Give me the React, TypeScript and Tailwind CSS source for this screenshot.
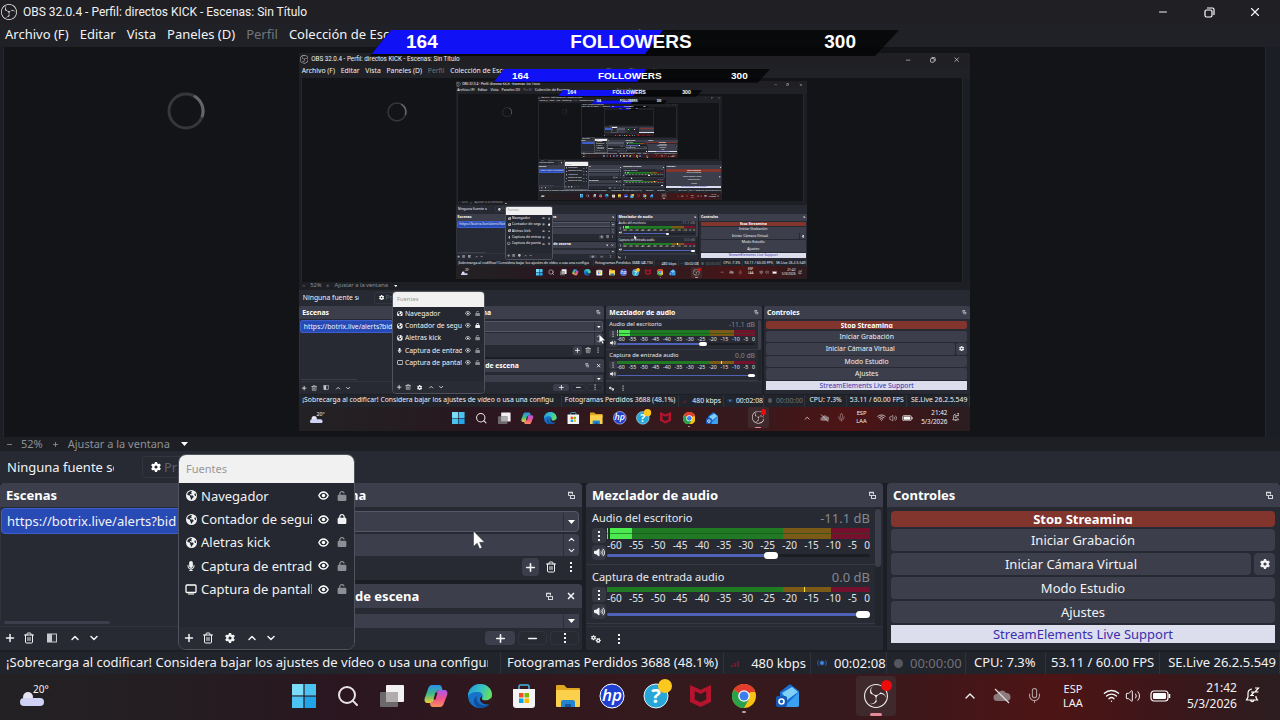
import React, { useId, useState } from 'react';
import { ChevronDown, ChevronUp, Minus, Plus, Search, Trash2, X, Mic, Wifi, Volume2 } from 'lucide-react';
import { FaEarthAmericas, FaGear, FaGears, FaLock, FaMicrophone, FaUnlock, FaVolumeHigh } from 'react-icons/fa6';
import { SiObsstudio } from 'react-icons/si';

type Source = {
	name: string;
	kind: 'browser' | 'mic' | 'display';
	locked: boolean;
};

type Channel = {
	name: string;
	level: string;
	volume: number;
	active: boolean;
};

const MAX_DEPTH = 5;

const SOURCES: Source[] = [
	{ name: 'Navegador', kind: 'browser', locked: false },
	{ name: 'Contador de seguidores', kind: 'browser', locked: true },
	{ name: 'Aletras kick', kind: 'browser', locked: false },
	{ name: 'Captura de entrada', kind: 'mic', locked: false },
	{ name: 'Captura de pantalla', kind: 'display', locked: false },
];

const CHANNELS: Channel[] = [
	{ name: 'Audio del escritorio', level: '-11.1 dB', volume: 63, active: true },
	{ name: 'Captura de entrada audio', level: '0.0 dB', volume: 100, active: false },
];

const SCALE_MARKS = ['-60', '-55', '-50', '-45', '-40', '-35', '-30', '-25', '-20', '-15', '-10', '-5', '0'];

// the pointer trails a little behind in every captured frame
const CURSOR_POSITIONS = ['left-[473px] top-[530px]', 'left-[572px] top-[536px]', 'left-[648px] top-[560px]'];

const PopOutIcon: React.FC = () => (
	<svg width="9" height="9" viewBox="0 0 9 9" fill="none" stroke="#d6d7dc" strokeWidth="1">
		<path d="M3 4.500H1.500v-3h4v2" />
		<path d="M1 1.500h5" strokeWidth="1.400" />
		<rect x="3.500" y="4.500" width="4" height="3" />
	</svg>
);

const DotsIcon: React.FC = () => (
	<svg width="4" height="12" viewBox="0 0 4 12" fill="#f2f2f4">
		<rect x="1" y="1" width="2" height="2" />
		<rect x="1" y="5" width="2" height="2" />
		<rect x="1" y="9" width="2" height="2" />
	</svg>
);

const CaretIcon: React.FC = () => (
	<svg width="7" height="4" viewBox="0 0 7 4" fill="#fff">
		<path d="M0 0h7L3.500 4z" />
	</svg>
);

const EyeIcon: React.FC = () => (
	<svg width="11" height="9" viewBox="0 0 11 9" fill="none">
		<path d="M.8 4.500C2 2 3.600 1 5.500 1s3.500 1 4.700 3.500C9 7 7.400 8 5.500 8S2 7 .8 4.500z" stroke="#fff" strokeWidth="1.300" />
		<circle cx="5.500" cy="4.500" r="1.700" fill="#fff" />
	</svg>
);

const DisplayIcon: React.FC = () => (
	<svg width="12" height="11" viewBox="0 0 12 11" fill="none">
		<rect x="1" y="1" width="10" height="7.500" rx="1" stroke="#fff" strokeWidth="1.300" />
		<path d="M3 10h6" stroke="#fff" strokeWidth="1.200" />
	</svg>
);

const TrashIcon: React.FC = () => <Trash2 size={12} strokeWidth={2} />;

const TitleBar: React.FC = () => (
	<header className="flex h-6 items-center bg-[#202024] pr-[2px] pl-[1px]">
		<SiObsstudio size={16} />
		<h1 className="ml-[6px] flex-1 font-[Roboto,sans-serif] text-[12px] whitespace-nowrap text-[#f0f0f2]">
			OBS 32.0.4 - Perfil: directos KICK - Escenas: Sin Título
		</h1>
		<button aria-label="Minimizar" className="flex w-[46px] justify-center">
			<Minus size={12} />
		</button>
		<button aria-label="Restaurar" className="flex w-[46px] justify-center">
			<svg width="11" height="11" viewBox="0 0 11 11" fill="none" stroke="#fff" strokeWidth="1.200">
				<rect x="1" y="3" width="7" height="7" rx="1.500" />
				<path d="M3 1h5.500A1.500 1.500 0 0 1 10 2.500V8" />
			</svg>
		</button>
		<button aria-label="Cerrar" className="flex w-[46px] justify-center">
			<X size={14} />
		</button>
	</header>
);

const MenuBar: React.FC = () => (
	<nav className="flex h-[23px] items-center gap-[11px] overflow-hidden bg-[#1f2126] pb-[3px] pl-[5px] whitespace-nowrap">
		<button>Archivo (F)</button>
		<button>Editar</button>
		<button>Vista</button>
		<button>Paneles (D)</button>
		<button className="text-[#73757b]">Perfil</button>
		<button>Colección de Escenas</button>
		<button className="ml-[158px] text-[#73757b]">StreamElements</button>
	</nav>
);

const FollowerGoal: React.FC = () => (
	<div className="absolute top-[30px] left-[370px] h-[26px] w-[529px]">
		<div className="h-full bg-[#050506]/85 [clip-path:polygon(21px_0,100%_0,505px_100%,0_100%)]">
			<div className="h-6 w-[293px] bg-[#1111f5] [clip-path:polygon(21px_0,100%_0,275px_100%,0_100%)]" />
		</div>
		<div className="absolute inset-0 flex h-6 items-center justify-between pr-[43px] pl-9 font-['Liberation_Sans',Arial,sans-serif] text-[19px] font-bold text-white">
			<span>164</span>
			<span>FOLLOWERS</span>
			<span>300</span>
		</div>
	</div>
);

const Spinner: React.FC = () => (
	<svg className="absolute top-[92px] left-[167px]" width="38" height="38" viewBox="0 0 38 38" fill="none" strokeWidth="3">
		<circle cx="19" cy="19" r="17" stroke="#37373a" />
		<path d="M27 4a17 17 0 0 1 8 21" stroke="#66666a" />
	</svg>
);

const Cursor: React.FC<{ depth: number }> = ({ depth }) => (
	<svg
		className={`absolute z-20 ${CURSOR_POSITIONS[Math.min(depth, CURSOR_POSITIONS.length - 1)]}`}
		width="12"
		height="20"
		viewBox="0 0 12 20">
		<path d="M.5 1v15.500l3.600-3.300 2.500 5.600 2.400-1-2.400-5.500h5z" fill="#fff" stroke="#24262e" strokeWidth=".5" />
	</svg>
);

const Preview: React.FC<{ depth: number }> = ({ depth }) => (
	<main className="mr-[14px] ml-[3px] flex min-h-[390px] flex-1 items-center justify-center overflow-hidden border-x border-[#25272d] bg-[#131418]">
		{depth < MAX_DEPTH && (
			<div className="w-[1280px] shrink-0 [zoom:0.524]" aria-hidden="true" inert>
				<Desktop depth={depth + 1} />
			</div>
		)}
	</main>
);

const ZoomBar: React.FC = () => (
	<div className="flex h-[14px] items-center overflow-hidden bg-[#1e1f24] pl-[6px] text-[11px] leading-[14px] text-[#8d8f95]">
		<button aria-label="Alejar">
			<Minus size={7} strokeWidth={3} />
		</button>
		<span className="ml-2">52%</span>
		<button aria-label="Acercar" className="ml-[9px]">
			<Plus size={7} strokeWidth={3} />
		</button>
		<button className="ml-[9px] flex items-center gap-[11px]">
			Ajustar a la ventana
			<CaretIcon />
		</button>
	</div>
);

const SourceToolbar: React.FC = () => (
	<div className="flex h-8 items-center bg-[#272a32] pb-px pl-[7px]">
		<span className="w-[107px] overflow-hidden whitespace-nowrap">Ninguna fuente seleccionada</span>
		<button aria-label="Propiedades" className="ml-7 flex h-[22px] w-12 items-center gap-[3px] rounded border border-[#33363f] pl-2 text-[#5f626b]">
			<FaGear size={10} color="#fff" />
			Pr
		</button>
	</div>
);

type DockProps = {
	title: string;
	titleClass?: string;
	className?: string;
	closable?: boolean;
	floatable?: boolean;
	children: React.ReactNode;
};

const Dock: React.FC<DockProps> = ({ title, titleClass, className, closable, floatable = true, children }) => (
	<section className={`flex min-w-0 flex-col overflow-hidden rounded-t bg-[#272a33] ${className ?? ''}`}>
		<div className="flex h-6 shrink-0 items-center bg-[#3c3f4b] px-[6px]">
			<h2 className={`flex-1 font-bold whitespace-nowrap text-white ${titleClass ?? ''}`}>{title}</h2>
			{floatable && (
				<button aria-label="Desacoplar">
					<PopOutIcon />
				</button>
			)}
			{closable && (
				<button aria-label="Cerrar panel" className="ml-3">
					<X size={10} strokeWidth={4} />
				</button>
			)}
		</div>
		{children}
	</section>
);

const ScenesDock: React.FC = () => (
	<Dock title="Escenas" floatable={false}>
		<ul className="flex-1 border-x border-[#31343e] pt-px">
			<li className="flex h-[26px] items-center overflow-hidden rounded-sm border border-[#3d5fce] bg-[#284ab5] pl-[5px] whitespace-nowrap">
				https://botrix.live/alerts?bid
			</li>
		</ul>
		<div className="mb-[2px] ml-1 h-[3px] w-[106px] rounded-sm bg-[#3c3f4b]" />
		<div className="flex h-6 items-center gap-[7px] border-t border-[#31343e] pb-[2px] pl-1">
			<button aria-label="Añadir escena">
				<Plus size={12} strokeWidth={3} />
			</button>
			<button aria-label="Eliminar escena">
				<TrashIcon />
			</button>
			<button aria-label="Filtros" className="mx-1">
				<svg width="12" height="10" viewBox="0 0 12 10">
					<rect x="1.500" y="1" width="9" height="8" fill="#31343e" stroke="#c9cad0" />
					<rect x="2" y="1" width="4" height="8" fill="#c9cad0" />
				</svg>
			</button>
			<button aria-label="Subir escena">
				<ChevronUp size={12} strokeWidth={3} />
			</button>
			<button aria-label="Bajar escena">
				<ChevronDown size={12} strokeWidth={3} />
			</button>
		</div>
	</Dock>
);

const toolButton = 'flex items-center justify-center rounded-sm border border-[#31343e]';

const TransitionDocks: React.FC = () => (
	<div className="flex min-w-0 flex-col gap-1">
		<Dock title="na" titleClass="pl-[78px]" className="h-[97px]">
			<div className="flex flex-col gap-[2px] px-[3px] pt-1">
				<div className="relative">
					<select
						aria-label="Transición"
						className="block h-[21px] w-full appearance-none rounded-sm border border-[#555967] bg-[#3c3f4b]"
					/>
					<span className="pointer-events-none absolute inset-y-[2px] right-0 flex w-4 items-center justify-center border-l border-[#2c2f38]">
						<CaretIcon />
					</span>
				</div>
				<div className="flex h-[22px] rounded-sm bg-[#3c3f4b]">
					<input aria-label="Duración" className="min-w-0 flex-1 bg-transparent" />
					<div className="flex w-4 flex-col items-center justify-between border-l border-[#2c2f38] py-px">
						<button aria-label="Aumentar">
							<ChevronUp size={9} strokeWidth={3} />
						</button>
						<button aria-label="Reducir">
							<ChevronDown size={9} strokeWidth={3} />
						</button>
					</div>
				</div>
				<div className="flex h-[18px] items-center justify-end gap-1">
					<button aria-label="Añadir transición" className="flex h-[18px] w-[17px] items-center justify-center rounded bg-[#3c3f4b]">
						<Plus size={13} strokeWidth={3} />
					</button>
					<button aria-label="Eliminar transición" className="flex w-4 justify-center">
						<TrashIcon />
					</button>
					<button aria-label="Más opciones" className="flex w-4 justify-center">
						<DotsIcon />
					</button>
				</div>
			</div>
		</Dock>
		<Dock title="de escena" titleClass="pl-[83px]" className="h-[66px]" closable>
			<div className="px-[3px] pt-[6px]">
				<div className="relative">
					<select aria-label="Transiciones de escena" className="block h-[14px] w-full appearance-none bg-[#3c3f4b]" />
					<span className="pointer-events-none absolute inset-y-0 right-0 flex w-4 items-center justify-center border-l border-[#2c2f38]">
						<CaretIcon />
					</span>
				</div>
				<div className="mt-[3px] flex h-4 justify-end gap-[3px]">
					<button aria-label="Añadir" className="flex h-[14px] w-[30px] items-center justify-center rounded-sm bg-[#3c3f4b]">
						<Plus size={13} strokeWidth={3} />
					</button>
					<button aria-label="Quitar" className={`h-[14px] w-[29px] ${toolButton}`}>
						<Minus size={13} strokeWidth={3} />
					</button>
					<button aria-label="Opciones" className={`h-[14px] w-[29px] ${toolButton}`}>
						<DotsIcon />
					</button>
				</div>
			</div>
		</Dock>
	</div>
);

const meterColors = 'bg-[linear-gradient(to_right,#1f7a23_67%,#7a5a16_67%,#7a5a16_85%,#76102f_85%)]';

const MixerChannel: React.FC<{ channel: Channel }> = ({ channel }) => {
	const [volume, setVolume] = useState(channel.volume);
	const id = useId();

	return (
		<div className="border-b border-[#363944] pt-px pr-[5px] pb-1 pl-[6px]">
			<div className="flex h-5 items-center justify-between">
				<label htmlFor={id} className="text-[11px] text-[#e8e8ec]">
					{channel.name}
				</label>
				<span className="text-[#85878f]">{channel.level}</span>
			</div>
			<div className="flex h-8 gap-px">
				<div className="flex w-[14px] flex-col gap-[2px]">
					<button aria-label="Opciones de audio" className="flex h-[15px] items-center justify-center rounded-sm bg-[#363944]">
						<DotsIcon />
					</button>
					<button aria-label="Silenciar" className="flex h-[15px] items-center justify-center rounded-sm bg-[#363944]">
						<FaVolumeHigh size={11} />
					</button>
				</div>
				<div className="flex min-w-0 flex-1 flex-col">
					{channel.active ? (
						<div className={`relative h-[11px] ${meterColors}`}>
							<div className="absolute inset-y-0 left-0 w-[25px] border-l border-[#4cff4c] bg-[#4bea4f]">
								<div className="h-full w-[2px] bg-[#10401a]" />
							</div>
							<div className="absolute inset-x-0 top-[5px] h-px bg-[#14521a]/60" />
						</div>
					) : (
						<div className={`relative h-[5px] ${meterColors}`}>
							<div className="absolute inset-y-0 left-3/4 w-px bg-[#ffe14c]" />
						</div>
					)}
					<div className="flex h-[11px] justify-between text-[10px] leading-[12px] text-[#e4e4e8]">
						{SCALE_MARKS.map(mark => (
							<span key={mark}>{mark}</span>
						))}
					</div>
					<div className="mt-auto flex h-[10px] items-center">
						<input
							id={id}
							type="range"
							min={0}
							max={100}
							value={volume}
							onChange={e => setVolume(+e.target.value)}
							style={{ backgroundSize: `${volume}% 100%` }}
							className="block h-[3px] w-full appearance-none rounded bg-[#1b1d23] bg-[linear-gradient(#4f62b8,#4f62b8)] bg-no-repeat [&::-webkit-slider-thumb]:h-[7px] [&::-webkit-slider-thumb]:w-[14px] [&::-webkit-slider-thumb]:appearance-none [&::-webkit-slider-thumb]:rounded [&::-webkit-slider-thumb]:bg-white"
						/>
					</div>
				</div>
			</div>
		</div>
	);
};

const MixerDock: React.FC = () => (
	<Dock title="Mezclador de audio">
		<div className="flex flex-1">
			<div className="flex flex-1 flex-col gap-px">
				{CHANNELS.map(channel => (
					<MixerChannel key={channel.name} channel={channel} />
				))}
			</div>
			<div className="mr-[2px] w-[6px] bg-[#23252d] pt-[2px]">
				<div className="h-[58px] rounded-sm bg-[#3c3f4b]" />
			</div>
		</div>
		<div className="flex h-6 items-center gap-4 border-t border-[#31343e] pl-[5px]">
			<button aria-label="Propiedades de audio avanzadas">
				<FaGears size={10} />
			</button>
			<button aria-label="Menú del mezclador">
				<DotsIcon />
			</button>
		</div>
	</Dock>
);

const controlButton = 'flex h-[22px] w-full items-center justify-center rounded-sm bg-[#3c3f4b]';

const ControlsDock: React.FC = () => (
	<Dock title="Controles">
		<div className="flex flex-col gap-[2px] pt-1 pr-[5px] pl-1">
			<button className="flex h-4 justify-center overflow-hidden rounded-sm bg-[#81352d] pt-px font-bold text-white">
				<span className="h-[12px] overflow-hidden leading-[14px]">Stop Streaming</span>
			</button>
			<button className={controlButton}>Iniciar Grabación</button>
			<div className="flex gap-[3px]">
				<button className={controlButton}>Iniciar Cámara Virtual</button>
				<button aria-label="Configurar cámara virtual" className="flex w-[21px] shrink-0 items-center justify-center rounded-sm bg-[#3c3f4b]">
					<FaGear size={10} />
				</button>
			</div>
			<button className={controlButton}>Modo Estudio</button>
			<button className={controlButton}>Ajustes</button>
			<button className="flex h-[18px] items-center justify-center bg-[#dcdded] text-[#3a2fae]">StreamElements Live Support</button>
		</div>
	</Dock>
);

const SourceIcon: React.FC<{ kind: Source['kind'] }> = ({ kind }) => {
	if (kind === 'browser') return <FaEarthAmericas size={11} />;
	if (kind === 'mic') return <FaMicrophone size={10} />;
	return <DisplayIcon />;
};

const SourcesWindow: React.FC = () => (
	<div className="absolute bottom-[2px] left-[178px] z-10 flex h-[196px] w-[177px] flex-col overflow-hidden rounded-lg border border-[#50535d] bg-[#252830]">
		<h2 className="flex h-7 items-center bg-[#f1f1f1] pl-[7px] text-[11px] text-[#97979a]">Fuentes</h2>
		<ul className="grid h-[118px] grid-cols-1 grid-rows-5 pt-px">
			{SOURCES.map(source => (
				<li key={source.name} className="flex items-center pr-[7px] pl-[6px]">
					<span className="flex w-3 justify-center">
						<SourceIcon kind={source.kind} />
					</span>
					<span className="ml-1 min-w-0 flex-1 overflow-hidden whitespace-nowrap">{source.name}</span>
					<button aria-label="Visibilidad" className="ml-[6px]">
						<EyeIcon />
					</button>
					<button aria-label="Bloqueo" className="ml-2">
						{source.locked ? <FaLock size={10} /> : <FaUnlock size={10} color="#8c8e96" />}
					</button>
				</li>
			))}
		</ul>
		<div className="mt-auto flex h-[22px] items-center gap-[7px] bg-[#2a2c35] pl-1">
			<button aria-label="Añadir fuente">
				<Plus size={12} strokeWidth={3} />
			</button>
			<button aria-label="Eliminar fuente">
				<TrashIcon />
			</button>
			<button aria-label="Propiedades de la fuente" className="mx-1">
				<FaGear size={10} />
			</button>
			<button aria-label="Subir fuente">
				<ChevronUp size={12} strokeWidth={3} />
			</button>
			<button aria-label="Bajar fuente">
				<ChevronDown size={12} strokeWidth={3} />
			</button>
		</div>
	</div>
);

const StatusBar: React.FC = () => (
	<footer className="flex h-[22px] items-center bg-[#22242b] whitespace-nowrap [&>*]:h-full [&>*]:border-r [&>*]:border-[#30333c] [&>*]:leading-[20px]">
		<div className="min-w-0 flex-1 pr-3 pl-[6px]">
			<p className="overflow-hidden">¡Sobrecarga al codificar! Considera bajar los ajustes de vídeo o usa una configuración</p>
		</div>
		<span className="w-[223px] pl-[6px]">Fotogramas Perdidos 3688 (48.1%)</span>
		<span className="flex w-[87px] items-center justify-between pr-1 pl-[7px]">
			<svg width="10" height="8" viewBox="0 0 10 8" fill="#6b1c30">
				<path d="M0 6h2v2H0zM3 4h2v4H3zM6 2h2v6H6z" />
			</svg>
			480 kbps
		</span>
		<span className="flex w-[76px] items-center gap-[6px] pl-[5px]">
			<svg width="12" height="10" viewBox="0 0 12 10" fill="none" stroke="#2b5fa8">
				<circle cx="6" cy="5" r="2" fill="#4a90e2" />
				<path d="M3 2a4 4 0 0 0 0 6M9 2a4 4 0 0 1 0 6" />
			</svg>
			00:02:08
		</span>
		<span className="flex w-[79px] items-center gap-[7px] pl-[7px] text-[#6f7178]">
			<span className="size-[9px] rounded-full bg-[#55575e]" />
			00:00:00
		</span>
		<span className="w-20 pl-2">CPU: 7.3%</span>
		<span className="w-[114px] pl-[5px]">53.11 / 60.00 FPS</span>
		<span className="w-[120px] pr-[3px] text-right">SE.Live 26.2.5.549</span>
	</footer>
);

const WindowsIcon: React.FC = () => (
	<svg width="24" height="24" viewBox="0 0 24 24" fill="#4cc2f1">
		<path d="M0 0h11.400v11.400H0z" fill="#7bdcf8" />
		<path d="M12.600 0H24v11.400H12.600zM0 12.600h11.400V24H0z" />
		<path d="M12.600 12.600H24V24H12.600z" fill="#22a5e8" />
	</svg>
);

const TaskViewIcon: React.FC = () => (
	<svg width="24" height="24" viewBox="0 0 24 24">
		<rect x="6" y="1" width="18" height="17" rx="1" fill="#f2f0f1" />
		<rect x="0" y="8" width="18" height="15" rx="1" fill="#6d686b" />
		<path d="M6 8h12v10H6z" fill="#b0acae" />
	</svg>
);

const CopilotIcon: React.FC<{ id: string }> = ({ id }) => (
	<svg width="24" height="24" viewBox="0 0 24 24">
		<defs>
			<linearGradient id={`${id}-a`} x1="0" y1="0" x2="0" y2="1">
				<stop offset="0" stopColor="#2b8df0" />
				<stop offset=".5" stopColor="#3dbb85" />
				<stop offset="1" stopColor="#f0d033" />
			</linearGradient>
			<linearGradient id={`${id}-b`} x1="0" y1="0" x2="0" y2="1">
				<stop offset="0" stopColor="#a55bf0" />
				<stop offset=".5" stopColor="#f0508c" />
				<stop offset="1" stopColor="#f9915a" />
			</linearGradient>
		</defs>
		<path d="M8 1h7c2 0 2.500 1 3 3l.5 2h-3c-2 0-3 1-3.500 3l-2 7c-.5 2-1.500 3-3.500 3H4c-3 0-4-2-3.200-5L4 5c.8-2.600 2-4 4-4z" fill={`url(#${id}-a)`} />
		<path d="M16 23H9c-2 0-2.500-1-3-3l-.3-1.300C8 19 9.500 18 10 16l2-7c.5-2 1.500-3 3.500-3H20c3 0 4 2 3.200 5L20 19c-.8 2.600-2 4-4 4z" fill={`url(#${id}-b)`} />
		<path d="M12.500 8.500l-2 7" stroke="#33191d" strokeWidth="2" />
	</svg>
);

const EdgeIcon: React.FC<{ id: string }> = ({ id }) => (
	<svg width="24" height="24" viewBox="0 0 24 24">
		<defs>
			<linearGradient id={`${id}-e`} x1="0" y1="0" x2="1" y2=".3">
				<stop offset="0" stopColor="#249ad8" />
				<stop offset=".6" stopColor="#35c1c4" />
				<stop offset="1" stopColor="#62dd68" />
			</linearGradient>
		</defs>
		<circle cx="12" cy="12" r="12" fill="#1673c8" />
		<path d="M0 11C1 4 6 0 12 0c7 0 12 5 12 10.500 0 4-3 6-6.500 6-3 0-4-1.200-3.500-2 1.500-2 1-6-3.500-6.500C6 7.500 1 9 0 13z" fill={`url(#${id}-e)`} />
		<path d="M9 12c-1.500 5 2.500 9.500 8 9.500 2 0 3.500-.5 5-1.600C19 24 12 25 8 22c-3-2.400-3-8 1-10z" fill="#0f4fa0" />
		<path d="M14 14.500c-.5.800.5 2 3.500 2 2.600 0 5-1.200 6-3.500l.2 3-1.700 3.800c-5 2-10-1-10-4.500 0-1 .7-2.300 2-3.300z" fill="#33191d" />
	</svg>
);

const StoreIcon: React.FC = () => (
	<svg width="24" height="24" viewBox="0 0 24 24">
		<path d="M7 6V2.500A1.500 1.500 0 0 1 8.500 1h7A1.500 1.500 0 0 1 17 2.500V6" fill="none" stroke="#45b6e6" strokeWidth="1.500" />
		<path d="M1 5h22v16a3 3 0 0 1-3 3H4a3 3 0 0 1-3-3z" fill="#f2f3f5" />
		<path d="M7 9h4.500v4.500H7z" fill="#f25022" />
		<path d="M12.500 9H17v4.500h-4.500z" fill="#7fba00" />
		<path d="M7 14.500h4.500V19H7z" fill="#00a4ef" />
		<path d="M12.500 14.500H17V19h-4.500z" fill="#ffb900" />
	</svg>
);

const FolderIcon: React.FC = () => (
	<svg width="24" height="24" viewBox="0 0 24 24">
		<path d="M0 2a1 1 0 0 1 1-1h7l3 3h12a1 1 0 0 1 1 1v5H0z" fill="#e0a520" />
		<path d="M0 6h24v16a1 1 0 0 1-1 1H1a1 1 0 0 1-1-1z" fill="#fbd14b" />
		<path d="M5 23v-5a2 2 0 0 1 2-2h10a2 2 0 0 1 2 2v5z" fill="#2385cf" />
		<path d="M9 23v-3h6v3z" fill="#155a9c" />
	</svg>
);

const HpIcon: React.FC = () => (
	<svg width="26" height="26" viewBox="0 0 26 26">
		<circle cx="13" cy="13" r="12" fill="#1f3fd0" stroke="#fff" />
		<text x="13" y="18" textAnchor="middle" fill="#fff" fontSize="17" fontWeight="600" fontStyle="italic" fontFamily="Open Sans">
			hp
		</text>
	</svg>
);

const HelpIcon: React.FC = () => (
	<svg width="30" height="30" viewBox="0 0 30 30">
		<circle cx="13" cy="17" r="12" fill="#27a7d8" stroke="#e7f5fb" />
		<text x="13" y="24" textAnchor="middle" fill="#fff" fontSize="20" fontWeight="bold" fontFamily="Open Sans">
			?
		</text>
		<circle cx="22" cy="7" r="7" fill="#fcc81f" />
	</svg>
);

const McAfeeIcon: React.FC = () => (
	<svg width="21" height="22" viewBox="0 0 22 26" fill="#b5142e" preserveAspectRatio="none">
		<path d="M0 0l11 5.500L22 0v20l-11 6-11-6zM5 7.500V17l6 3.300 6-3.300V7.500l-6 3z" fillRule="evenodd" />
	</svg>
);

const ChromeIcon: React.FC = () => (
	<svg width="24" height="24" viewBox="0 0 24 24">
		<circle cx="12" cy="12" r="12" fill="#fbc116" />
		<path d="M12 12L1.600 6A12 12 0 0 1 22.400 6z" fill="#e33b2e" />
		<path d="M12 12L1.600 6A12 12 0 0 0 12 24l5-9z" fill="#2aa14b" />
		<path d="M12 6h10.400l.8 2H12z" fill="#e33b2e" />
		<circle cx="12" cy="12" r="5.800" fill="#fff" />
		<circle cx="12" cy="12" r="4.500" fill="#3b7ded" />
	</svg>
);

const OutlookIcon: React.FC = () => (
	<svg width="24" height="24" viewBox="0 0 24 24">
		<path d="M4 8L13 .8a2 2 0 0 1 2 0L23 7v14a2 2 0 0 1-2 2H6a2 2 0 0 1-2-2z" fill="#1a6fd6" />
		<path d="M6 9l10-6 6 5-11 8z" fill="#7fd0f8" />
		<path d="M23 8v13a2 2 0 0 1-2 2H8z" fill="#3aa0f0" />
		<rect x="0" y="12" width="11" height="11" rx="2" fill="#1259b8" />
		<circle cx="5.500" cy="17.500" r="2.500" fill="none" stroke="#fff" strokeWidth="1.600" />
	</svg>
);

const appButton = 'flex h-full w-11 items-center justify-center';

const Taskbar: React.FC = () => {
	const id = useId();

	return (
		<div className="flex h-[46px] items-center bg-[linear-gradient(to_right,#232124_0%,#241d21_14%,#2b1620_27%,#34191d_50%,#36191d_66%,#4e1415_82%,#3a171a_92%,#2b1d20_100%)] pb-[3px]">
			<button className="flex w-[282px] items-start pl-5">
				<svg className="mt-1" width="26" height="16" viewBox="0 0 26 16">
					<circle cx="8" cy="7" r="5" fill="#e6e4f4" />
					<path d="M4 8h16a4 4 0 0 1 0 8H4a4 4 0 0 1 0-8z" fill="#cfd2f4" />
				</svg>
				<span className="-ml-[13px] text-[10px] leading-[6px]">20°</span>
			</button>
			<button aria-label="Inicio" className={appButton}>
				<WindowsIcon />
			</button>
			<button aria-label="Buscar" className={appButton}>
				<Search size={24} color="#e8e4e6" strokeWidth={2} />
			</button>
			<button aria-label="Vista de tareas" className={appButton}>
				<TaskViewIcon />
			</button>
			<button aria-label="Copilot" className={appButton}>
				<CopilotIcon id={id} />
			</button>
			<button aria-label="Edge" className={appButton}>
				<EdgeIcon id={id} />
			</button>
			<button aria-label="Microsoft Store" className={appButton}>
				<StoreIcon />
			</button>
			<button aria-label="Explorador de archivos" className={appButton}>
				<FolderIcon />
			</button>
			<button aria-label="HP" className={appButton}>
				<HpIcon />
			</button>
			<button aria-label="Ayuda" className={`pb-1 pl-1 ${appButton}`}>
				<HelpIcon />
			</button>
			<button aria-label="McAfee" className={appButton}>
				<McAfeeIcon />
			</button>
			<button aria-label="Chrome" className={`relative ${appButton}`}>
				<ChromeIcon />
				<span className="absolute bottom-1 h-[2px] w-1 rounded bg-[#b5a5a8]" />
			</button>
			<button aria-label="Outlook" className={appButton}>
				<OutlookIcon />
			</button>
			<button aria-label="OBS Studio" className="relative ml-[46px] flex h-10 w-10 items-center justify-center rounded bg-[#3f292c]">
				<SiObsstudio size={24} color="#eee" />
				<span className="absolute top-1 right-1 size-[11px] rounded-full bg-[#ee0b0b]" />
				<span className="absolute bottom-0 h-[3px] w-3 rounded bg-[#e58a94]" />
			</button>
			<div className="ml-auto flex items-center pr-5">
				<button aria-label="Iconos ocultos">
					<ChevronUp size={16} />
				</button>
				<svg className="ml-[15px]" width="18" height="16" viewBox="0 0 18 16">
					<path d="M4 13a3.500 3.500 0 0 1 0-7 5 5 0 0 1 9-1 4 4 0 0 1 1 8z" fill="#8d7a7c" />
					<path d="M2 1l14 14" stroke="#ddd" strokeWidth="1.300" />
				</svg>
				<Mic className="ml-[15px]" size={17} color="#b3a1a2" strokeWidth={1.5} />
				<span className="ml-5 text-center text-[11px] leading-[14px]">
					ESP
					<br />
					LAA
				</span>
				<Wifi className="ml-5" size={17} />
				<Volume2 className="ml-[5px]" size={16} strokeWidth={1.5} />
				<svg className="ml-[9px]" width="21" height="12" viewBox="0 0 21 12">
					<rect x="1" y="1" width="17" height="10" rx="3" fill="none" stroke="#fff" strokeWidth="1.200" />
					<rect x="3" y="3" width="13" height="6" rx="1" fill="#fff" />
					<path d="M19.500 4v4" stroke="#fff" strokeWidth="1.500" />
				</svg>
				<span className="ml-4 text-right text-[12px] leading-[16px]">
					21:42
					<br />
					5/3/2026
				</span>
				<svg className="ml-2" width="15" height="17" viewBox="0 0 15 17" fill="none" stroke="#fff" strokeWidth="1.200">
					<path d="M7 2a4.500 4.500 0 0 0-4 4.500V10l-1.500 3h11L11 10.500V9M5.500 13.500a2 2 0 0 0 3.500 0" />
					<path d="M6 5h3L6 8.500h3M10 1h3.500L10 5h3.500" />
				</svg>
			</div>
		</div>
	);
};

const Desktop: React.FC<{ depth: number }> = ({ depth }) => (
	<div className="relative flex flex-1 flex-col overflow-hidden bg-[#1c1e25] font-['Noto_Sans','Open_Sans',sans-serif] text-[13px] leading-[18px] text-[#f2f2f5]">
		<TitleBar />
		<MenuBar />
		<Preview depth={depth} />
		<ZoomBar />
		<SourceToolbar />
		<div className="relative grid h-[169px] grid-cols-[262fr_316fr_297fr_393fr] gap-x-1 pb-[2px]">
			<ScenesDock />
			<TransitionDocks />
			<MixerDock />
			<ControlsDock />
			<SourcesWindow />
		</div>
		<StatusBar />
		<Taskbar />
		<Spinner />
		<FollowerGoal />
		<Cursor depth={depth} />
	</div>
);

const App: React.FC = () => (
	<div className="flex min-h-screen flex-col">
		<Desktop depth={0} />
	</div>
);

export default App;
